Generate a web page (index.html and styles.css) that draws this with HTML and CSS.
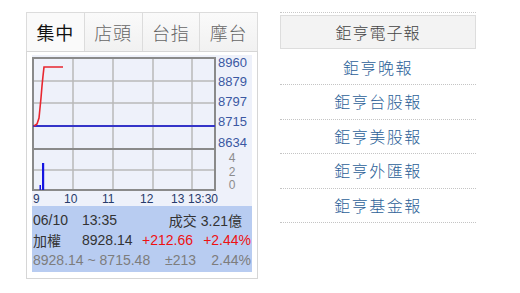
FILE: index.html
```html
<!DOCTYPE html>
<html lang="zh-Hant">

<head>
    <meta charset="UTF-8">
    <meta name="viewport" content="width=device-width, initial-scale=1.0">
    <title>台股大盤</title>
    <link rel="stylesheet" href="styles.css">
</head>

<body>
    <div class="page">
        <div class="market">
            <ul class="tabs">
                <li class="active">集中</li>
                <li>店頭</li>
                <li>台指</li>
                <li>摩台</li>
            </ul>
            <div class="panel">
                <svg class="chart" width="220" height="151" viewBox="32 55 220 151">
                    <rect x="32" y="55" width="220" height="151" fill="#eef1fa" />
                    <!-- grid -->
                    <g stroke="#b9b9b9" stroke-width="1.5">
                        <line x1="73" y1="58" x2="73" y2="190" />
                        <line x1="113" y1="58" x2="113" y2="190" />
                        <line x1="153" y1="58" x2="153" y2="190" />
                        <line x1="192" y1="58" x2="192" y2="190" />
                        <line x1="33" y1="81" x2="215" y2="81" />
                        <line x1="33" y1="103" x2="215" y2="103" />
                        <line x1="33" y1="170" x2="215" y2="170" />
                    </g>
                    <!-- frame -->
                    <g stroke="#8a8a8a" stroke-width="2" fill="none">
                        <rect x="33" y="58" width="182" height="132" />
                        <line x1="33" y1="149" x2="215" y2="149" />
                    </g>
                    <!-- prev close -->
                    <line x1="33" y1="126" x2="215" y2="126" stroke="#3434c8" stroke-width="2" />
                    <!-- index -->
                    <polyline points="34,126 37,124 39,118 40,108 41,98 42,86 43,76 44,67 63,67" fill="none" stroke="#e8262f" stroke-width="1.6" />
                    <!-- volume -->
                    <rect x="42" y="163" width="2.2" height="27" fill="#1515e0" />
                    <rect x="39.5" y="185" width="1.5" height="5" fill="#1515e0" />
                    <!-- price labels -->
                    <g class="ylabel">
                        <text x="218" y="67">8960</text>
                        <text x="218" y="86">8879</text>
                        <text x="218" y="106">8797</text>
                        <text x="218" y="126">8715</text>
                        <text x="218" y="147">8634</text>
                    </g>
                    <g class="vlabel">
                        <text x="232" y="162">4</text>
                        <text x="232" y="176">2</text>
                        <text x="232" y="189">0</text>
                    </g>
                    <g class="xlabel">
                        <text x="33" y="203">9</text>
                        <text x="64" y="203">10</text>
                        <text x="102" y="203">11</text>
                        <text x="140" y="203">12</text>
                        <text x="171" y="203">13</text>
                        <text x="188" y="203">13:30</text>
                    </g>
                </svg>
                <div class="quote">
                    <div class="quote-row">
                        <span class="label">06/10</span>
                        <span>13:35</span>
                        <span class="volume">成交 3.21億</span>
                    </div>
                    <div class="quote-row">
                        <span class="label">加權</span>
                        <span class="price">8928.14</span>
                        <span class="up">+212.66</span>
                        <span class="up pct">+2.44%</span>
                    </div>
                    <div class="quote-row range">
                        <span class="span-range">8928.14 ~ 8715.48</span>
                        <span>±213</span>
                        <span class="amp">2.44%</span>
                    </div>
                </div>
            </div>
        </div>

        <div class="letters">
            <div class="letters-head">鉅亨電子報</div>
            <ul class="letters-list">
                <li><a href="#">鉅亨晚報</a></li>
                <li><a href="#">鉅亨台股報</a></li>
                <li><a href="#">鉅亨美股報</a></li>
                <li><a href="#">鉅亨外匯報</a></li>
                <li><a href="#">鉅亨基金報</a></li>
            </ul>
        </div>
    </div>
</body>

</html>
```

FILE: styles.css
```css
body {
    margin: 0;
    padding: 0;
    background: #ffffff;
    font-family: "Liberation Sans", "Noto Sans CJK TC", sans-serif;
    color: #333;
}

ul {
    list-style: none;
    margin: 0;
    padding: 0;
}

.page {
    display: flex;
    align-items: flex-start;
    gap: 22px;
    padding: 12px 0 0 26px;
}

/* left: market box */

.market {
    width: 232px;
}

.tabs {
    display: flex;
    height: 39px;
}

.tabs li {
    flex: 1;
    display: flex;
    align-items: center;
    justify-content: center;
    border: 1px solid #dcdcdc;
    border-bottom: none;
    margin-left: -1px;
    background: linear-gradient(#fafafa, #f1f1f1);
    font-family: "Noto Sans CJK TC", sans-serif;
    font-size: 18px;
    font-weight: 300;
    letter-spacing: 1px;
    color: #666;
}

.tabs li:first-child {
    margin-left: 0;
}

.tabs li.active {
    background: #fafafa;
    color: #111;
    font-weight: 400;
}

.panel {
    border: 1px solid #d6d6d6;
    padding: 3px 5px 6px 5px;
}

.chart {
    display: block;
}

.chart text {
    font-family: "Liberation Sans", sans-serif;
}

.ylabel text {
    font-size: 13px;
    fill: #3b58a2;
}

.vlabel text {
    font-size: 12px;
    fill: #8c8c8c;
    text-anchor: middle;
}

.xlabel text {
    font-size: 12px;
    fill: #273a6b;
}

.quote {
    background: #b8ccf1;
    padding: 4px 1px 2px 1px;
    font-size: 14px;
}

.quote-row {
    display: flex;
    align-items: center;
    height: 20px;
    white-space: nowrap;
}

.quote-row .label {
    width: 49px;
}

.volume {
    margin-left: auto;
    padding-right: 9px;
}

.price {
    width: 60px;
}

.up {
    color: #ee1111;
}

.pct {
    margin-left: auto;
}

.range {
    color: #7d7d7d;
}

.span-range {
    width: 132px;
}

.amp {
    margin-left: auto;
}

/* right: newsletters */

.letters {
    width: 196px;
    padding-top: 2px;
    border-top: 1px dotted #c8c8c8;
    font-family: "Noto Sans CJK TC", sans-serif;
    font-weight: 300;
}

.letters-head {
    height: 32px;
    line-height: 32px;
    text-align: center;
    background: #f3f3f3;
    border: 1px solid #dddddd;
    font-size: 16px;
    letter-spacing: 1px;
    color: #444;
}

.letters-list li {
    height: 33.5px;
    line-height: 33.5px;
    text-align: center;
    border-bottom: 1px dotted #c4c4c4;
}

.letters-list li:first-child {
    height: 35px;
    line-height: 37px;
}

.letters-list a {
    text-decoration: none;
    font-size: 16px;
    letter-spacing: 1.5px;
    color: #2c5f98;
}
```
